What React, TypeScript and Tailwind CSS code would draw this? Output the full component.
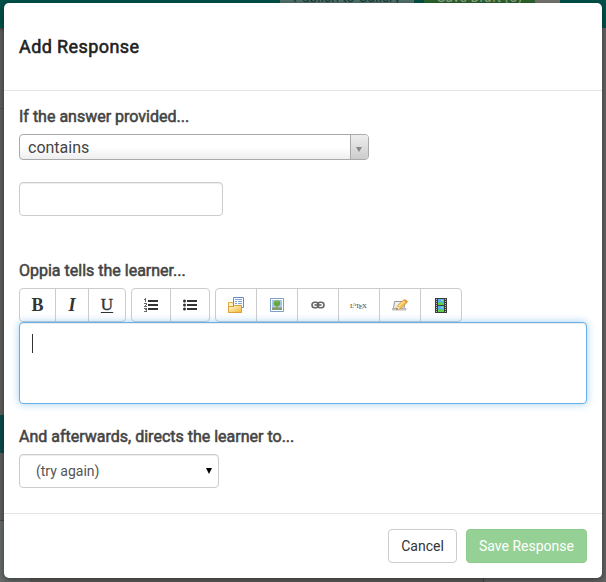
import type { ReactNode } from "react";

const heading = "font-normal [-webkit-text-stroke:0.55px_currentColor]";

function Group({ children, className = "" }: { children: ReactNode; className?: string }) {
  return (
    <div className={`flex h-[34px] divide-x divide-[#ccc] rounded border border-[#ccc] bg-white ${className}`}>
      {children}
    </div>
  );
}

function Tool({ label, width, children }: { label: string; width: string; children: ReactNode }) {
  return (
    <button aria-label={label} className={`flex shrink-0 items-center justify-center text-[#333] ${width}`}>
      {children}
    </button>
  );
}

function OrderedIcon() {
  return (
    <svg width="14" height="14" viewBox="0 0 14 14" shapeRendering="crispEdges">
      <path d="M4 2h10v2H4zM4 6h10v2H4zM4 10h10v2H4z" fill="#333" />
      <path d="M1 0h1v4H1zM0 1h1v1H0zM0 5h2v1H0zM2 5h1v2H2zM1 7h1v1H1zM0 8h3v1H0zM0 10h3v1H0zM1 11h2v1H1zM2 12h1v1H2zM0 13h3v1H0z" fill="#666" />
    </svg>
  );
}

function BulletIcon() {
  return (
    <svg width="14" height="14" viewBox="0 0 14 14">
      <path d="M4 2h10v2H4zM4 6h10v2H4zM4 10h10v2H4z" fill="#333" />
      <g fill="#333"><circle cx="1.5" cy="3" r="1.5" /><circle cx="1.5" cy="7" r="1.5" /><circle cx="1.5" cy="11" r="1.5" /></g>
    </svg>
  );
}

function FolderIcon() {
  return (
    <svg width="16" height="16" viewBox="0 0 16 16">
      <defs><linearGradient id="folder" x2="1" y2="1"><stop stopColor="#fffbe0" /><stop offset="1" stopColor="#f5b52e" /></linearGradient></defs>
      <path d="M.5 15.500V5.500h4l1 1.500h8v8.500z" fill="#fff3c4" stroke="#e6ae42" />
      <path d="M5.500.5h10v10h-10z" fill="#f8fbff" stroke="#6688bd" />
      <path d="M7 2.500h7M7 4.500h2m1 0h4M7 6.500h2m1 0h4M7 8.500h7" stroke="#85a3d2" />
      <path d="M.5 9.500h5l1-1h7v7H.5z" fill="url(#folder)" stroke="#dfa03a" />
    </svg>
  );
}

function PictureIcon() {
  return (
    <svg width="14" height="14" viewBox="0 0 14 14">
      <path d="M.5.500h13v13H.5z" fill="#fff" stroke="#7f9fc8" />
      <path d="M2 2h10v10H2z" fill="#a9c6ea" />
      <path d="M2 9.500h10V12H2z" fill="#7f9f70" />
      <path d="M6.300 7h1.400v3.500H6.300z" fill="#b58a3a" />
      <ellipse cx="7" cy="5.200" rx="3.200" ry="2.900" fill="#62a83a" />
      <path d="M5 4.300q2-2 3.500 0" stroke="#8cc45c" fill="none" />
    </svg>
  );
}

function LinkIcon() {
  return (
    <svg width="14" height="8" viewBox="0 0 14 8" fill="none">
      <rect x="1" y="1.200" width="6.500" height="5.500" rx="2.700" stroke="#666" strokeWidth="1.600" />
      <rect x="6.500" y="1.200" width="6.500" height="5.500" rx="2.700" stroke="#666" strokeWidth="1.600" />
      <path d="M3.500 4h7" stroke="#444" strokeWidth="1.500" />
      <path d="M4 4h6" stroke="#bbb" strokeWidth=".5" />
    </svg>
  );
}

function LatexIcon() {
  return (
    <svg width="18" height="9" viewBox="0 0 18 9" overflow="visible" fill="#444" fontFamily="Liberation Serif, serif">
      <text y="6.500" fontSize="6.800">
        L<tspan dx="-1.600" dy="-1.200" fontSize="5">A</tspan><tspan dx="-.8" dy="1.200">T</tspan><tspan dx="-.9" dy="1.300">E</tspan><tspan dx="-.7" dy="-1.300">X</tspan>
      </text>
    </svg>
  );
}

function PencilIcon() {
  return (
    <svg width="16" height="12" viewBox="0 0 16 12">
      <path d="M2.500 2.500h10.500l-1 7H1.500z" fill="#eee" stroke="#999" />
      <path d="M.5 9.500h13.500v1.500H.5z" fill="#ddd" stroke="#aaa" strokeWidth=".8" />
      <path d="M4.500 10.500l1-3.800 6-5.700q2.800-1 4 2L8.800 9.500z" fill="#f6bf4e" stroke="#c98a30" strokeWidth=".7" />
      <path d="M6.900 7l6-5.200" stroke="#ffe49a" strokeWidth="1.300" />
      <path d="M12.200.8q2.700-.6 3.300 2l-1.200 1.100-2.900-2.300z" fill="#e89b4c" />
      <path d="M4.500 10.500l1-3.400 2.700 2.500z" fill="#f8e3bc" /><path d="M4.500 10.500l.4-1.500 1.200 1.100z" fill="#444" />
    </svg>
  );
}

function FilmIcon() {
  return (
    <svg width="12" height="15" viewBox="0 0 12 15" shapeRendering="crispEdges">
      <path d="M0 0h12v15H0z" fill="#3d3d3d" />
      <path d="M1.500 1v14M10.500 1v14" stroke="#bbb" strokeWidth="1" strokeDasharray="1 1" />
      <path d="M3 1h6v6H3zM3 8h6v6H3z" fill="#4fb4ee" />
      <path d="M3 5h2V4h2v1h2v2H3zM3 12h2v-1h2v1h2v2H3z" fill="#5fcf45" />
      <path d="M6 2h2v1H6zM6 9h2v1H6z" fill="#b9df78" />
    </svg>
  );
}

function Backdrop() {
  return (
    <div className="h-full bg-[#605e5c]">
      <div className="flex h-7 bg-[#005149] pl-[280px] text-[14px] leading-5 shadow-[0_1px_3px_rgba(0,0,0,0.5)]">
        <div className="h-[10px] w-[134px] overflow-hidden bg-[#50706a] text-[#173b37]"><div className="-mt-[13px] pl-[13px] tracking-[-0.05px]">Publish to Gallery</div></div>
        <div className="ml-[10px] h-[10px] w-[111px] overflow-hidden bg-[#2b632c] text-[#91a58e]"><div className="-mt-[13px] pl-[13px]">Save Draft (0)</div></div>
        <div className="h-[10px] w-[25px] bg-[#777572]" />
      </div>
      <div className="flex h-[554px]">
        <div className="flex w-[30px] flex-col">
          <div className="h-[81px] border-b border-[#53514f]" />
          <div className="h-[306px]" />
          <div className="h-[38px] bg-[#0d4a4b]" />
          <div className="h-[68px] border-b border-[#494846]" />
          <div className="grow bg-[#666b69]" />
        </div>
        <div className="w-[454px] border-r border-[#464444] bg-[#605e5d]" />
        <div className="grow bg-[#646464]" />
      </div>
    </div>
  );
}

export default function App() {
  return (
    <div className="relative h-[582px] w-[606px] overflow-hidden font-['Roboto',sans-serif] text-[#444]">
      <Backdrop />
      <div role="dialog" className="absolute left-1 top-[3px] flex h-[575px] w-[598px] flex-col rounded-[5px] bg-white shadow-[0_2px_6px_rgba(0,0,0,0.45)]">
        <header className="flex h-[88px] shrink-0 items-center border-b border-[#e5e5e5] px-[15px]">
          <h3 className={`text-[18px] leading-5 tracking-[0.4px] text-[#222] ${heading}`}>Add Response</h3>
        </header>
        <main className="h-[422px] px-[15px] pt-[16px]">
          <h4 className={`text-[16px] leading-5 ${heading}`}>If the answer provided...</h4>
          <div className="mt-[7px] flex h-[26px] w-[350px] overflow-hidden rounded-[4px] border border-[#aaa] bg-linear-to-b from-white from-50% to-[#eee] text-[16px] leading-[25px]">
            <span className="grow pl-[8px]">contains</span>
            <span className="flex w-[18px] items-center justify-center border-l border-[#aaa] bg-linear-to-b from-[#eee] to-[#ccc] pr-px pt-[4px]">
              <svg width="6" height="5" viewBox="0 0 6 5"><path d="M0 0h6L3 5z" fill="#888" /></svg>
            </span>
          </div>
          <input aria-label="Answer" className="mt-[22px] block h-[34px] w-[204px] rounded-[4px] border border-[#ccc] px-3 shadow-[inset_0_1px_1px_rgba(0,0,0,0.075)]" />
          <h4 className={`mt-[45px] text-[16px] leading-5 ${heading}`}>Oppia tells the learner...</h4>
          <div className="mt-[7px] flex h-[34px] gap-[5px]">
            <Group className="w-[107px]">
              <Tool label="Bold" width="w-9"><b className="font-['Liberation_Serif',serif] text-[18px]">B</b></Tool>
              <Tool label="Italic" width="w-[33px]"><b className="font-['Liberation_Serif',serif] text-[18px] italic">I</b></Tool>
              <Tool label="Underline" width="w-9"><span className="font-['Liberation_Serif',serif] text-[17px] underline underline-offset-2 [-webkit-text-stroke:0.4px_currentColor]">U</span></Tool>
            </Group>
            <Group className="w-[79px]">
              <Tool label="Numbered list" width="w-[39px]"><OrderedIcon /></Tool>
              <Tool label="Bulleted list" width="w-[38px]"><BulletIcon /></Tool>
            </Group>
            <Group className="w-[247px]">
              <Tool label="Collapsible" width="w-[41px]"><FolderIcon /></Tool>
              <Tool label="Image" width="w-[41px]"><PictureIcon /></Tool>
              <Tool label="Link" width="w-[41px]"><LinkIcon /></Tool>
              <Tool label="Math" width="w-[41px]"><LatexIcon /></Tool>
              <Tool label="Tabs" width="w-[41px]"><PencilIcon /></Tool>
              <Tool label="Video" width="w-10"><FilmIcon /></Tool>
            </Group>
          </div>
          <div className="relative h-[82px] w-[568px] rounded-[4px] border border-[#66afe9] bg-white px-3 py-[11px] shadow-[inset_0_1px_1px_rgba(0,0,0,0.075),0_0_8px_rgba(102,175,233,0.6)]">
            <div className="h-[19px] w-px bg-[#333]" />
          </div>
          <h4 className={`mt-[23px] text-[16px] leading-5 ${heading}`}>And afterwards, directs the learner to...</h4>
          <button className="mt-[7px] flex h-[34px] w-[200px] items-center justify-between rounded-[4px] border border-[#ccc] pl-4 pr-[6px] text-[14px] text-[#555] shadow-[inset_0_1px_1px_rgba(0,0,0,0.075)]">
            <span>(try again)</span>
            <svg width="6" height="6" viewBox="0 0 6 6"><path d="M0 0h6L3 6z" fill="#000" /></svg>
          </button>
        </main>
        <footer className="flex h-[65px] justify-end gap-[9px] border-t border-[#e5e5e5] px-[15px] pt-[15px] text-[14px]">
          <button className="h-[34px] w-[69px] rounded-[4px] border border-[#ccc] text-[#333]">Cancel</button>
          <button className="h-[34px] w-[121px] rounded-[4px] border border-[#8ccc8c] bg-[#95d195] text-white">Save Response</button>
        </footer>
      </div>
    </div>
  );
}
